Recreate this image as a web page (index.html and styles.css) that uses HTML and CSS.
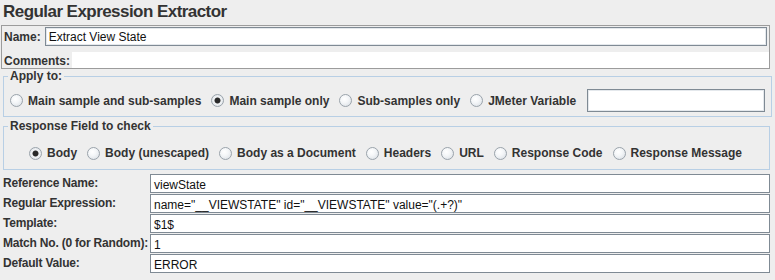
FILE: index.html
```html
<!DOCTYPE html>
<html>
    <head>
        <link rel="stylesheet" href="styles.css">
    </head>
    <body>
        <h1 class="title">Regular Expression Extractor</h1>
        <div class="name-panel">
            <div class="name-row">
                <span class="label">Name:</span>
                <div class="field">Extract View State</div>
            </div>
            <div class="comments-row">
                <span class="label">Comments:</span>
                <div class="comments"></div>
            </div>
        </div>
        <fieldset class="group">
            <legend>Apply to:</legend>
            <div class="radios apply">
                <label class="opt"><span class="radio"></span>Main sample and sub-samples</label>
                <label class="opt"><span class="radio on"></span>Main sample only</label>
                <label class="opt"><span class="radio"></span>Sub-samples only</label>
                <label class="opt"><span class="radio"></span>JMeter Variable</label>
                <div class="field var"></div>
            </div>
        </fieldset>
        <fieldset class="group response">
            <legend>Response Field to check</legend>
            <div class="radios centered">
                <label class="opt"><span class="radio on"></span>Body</label>
                <label class="opt"><span class="radio"></span>Body (unescaped)</label>
                <label class="opt"><span class="radio"></span>Body as a Document</label>
                <label class="opt"><span class="radio"></span>Headers</label>
                <label class="opt"><span class="radio"></span>URL</label>
                <label class="opt"><span class="radio"></span>Response Code</label>
                <label class="opt"><span class="radio"></span>Response Message</label>
            </div>
        </fieldset>
        <div class="form">
            <span class="label">Reference Name:</span>
            <div class="field">viewState</div>
            <span class="label">Regular Expression:</span>
            <div class="field">name="__VIEWSTATE" id="__VIEWSTATE" value="(.+?)"</div>
            <span class="label">Template:</span>
            <div class="field">$1$</div>
            <span class="label">Match No. (0 for Random):</span>
            <div class="field">1</div>
            <span class="label">Default Value:</span>
            <div class="field">ERROR</div>
        </div>
    </body>
</html>
```
FILE: styles.css
```css
body{
    margin: 0;
    background: #eeeeee;
    font-family: "Liberation Sans", Arial, sans-serif;
    font-size: 12px;
    color: #333;
    width: 775px;
    height: 280px;
    overflow: hidden;
}
.title{
    margin: 0;
    height: 25px;
    padding-left: 3px;
    font-size: 17px;
    line-height: 23px;
    letter-spacing: -0.55px;
    font-weight: bold;
    color: #333;
}
.label{
    font-weight: bold;
    white-space: nowrap;
}
.field{
    background: #fff;
    border: 1px solid #7f8a94;
    color: #111;
    padding: 0 3px;
    height: 17px;
    line-height: 18px;
    white-space: nowrap;
    overflow: hidden;
    box-sizing: content-box;
}
.name-panel{
    margin: 0 5px 0 1px;
    border: 1px solid #9c9c9c;
    height: 42px;
}
.name-row{
    display: flex;
    align-items: center;
    gap: 4px;
    padding: 1px 2px 0 2px;
}
.name-row .field{
    flex: 1;
    box-shadow: inset 0 0 0 1px #e4e8ec;
}
.comments-row{
    display: flex;
    align-items: flex-end;
    gap: 2px;
    padding-left: 2px;
    margin-top: 6px;
    height: 16px;
}
.comments-row .label{
    line-height: 14px;
}
.comments{
    flex: 1;
    height: 16px;
    background: #fff;
}
.group{
    margin: 1px 5px 0 3px;
    padding: 7px 6px 4px 6px;
    border: 1px solid #b8cfe5;
}
.group legend{
    font-weight: bold;
    line-height: 12px;
    padding: 0 2px;
    margin-left: -2px;
}
.response{
    margin-top: 3px;
    padding-top: 11px;
    padding-bottom: 6px;
}
.radios{
    display: flex;
    align-items: center;
    gap: 10px;
    height: 23px;
}
.centered{
    justify-content: center;
    height: 20px;
    padding-right: 2px;
}
.opt{
    display: flex;
    align-items: center;
    gap: 5px;
    font-weight: bold;
    white-space: nowrap;
}
.radio{
    width: 11px;
    height: 11px;
    border-radius: 50%;
    border: 1px solid #9aa3ab;
    background: radial-gradient(circle at 40% 35%, #ffffff 0, #f4f6f8 40%, #d6dce2 100%);
}
.radio.on{
    background: radial-gradient(circle, #2a2a2a 0, #2a2a2a 2.6px, #f2f4f6 3.4px, #d6dce2 100%);
}
.field.var{
    width: 170px;
    height: 21px;
    margin-left: 1px;
    box-shadow: inset 0 0 0 1px #e4e8ec;
}
.form{
    display: grid;
    grid-template-columns: 150px 1fr;
    grid-auto-rows: 19px;
    row-gap: 1px;
    margin: 4px 5px 0 0;
}
.form .label{
    padding-left: 3px;
    line-height: 18px;
    letter-spacing: -0.2px;
}
.form .field{
    line-height: 20px;
}
```
